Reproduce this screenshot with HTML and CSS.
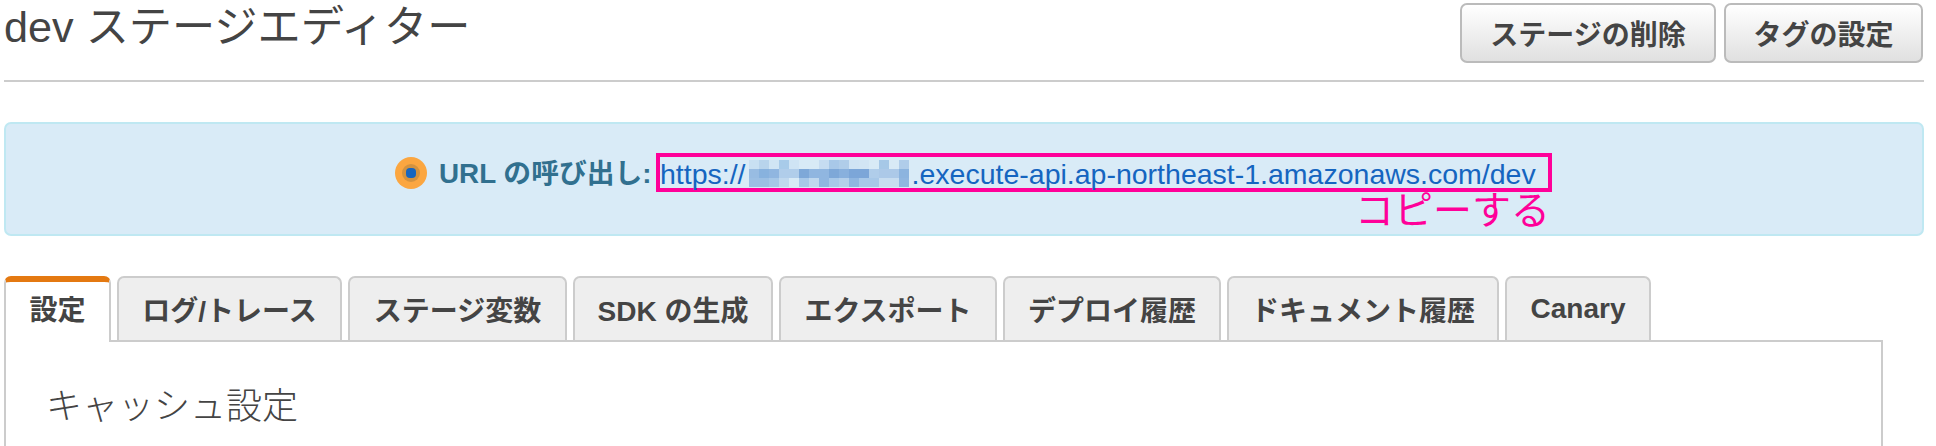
FILE: index.html
```html
<!DOCTYPE html>
<html lang="ja">
  <head>
    <meta charset="UTF-8" />
    <title>dev ステージエディター</title>
    <link rel="stylesheet" href="styles.css">
  </head>
  <body>
    <div class="head">
      <h1>dev ステージエディター</h1>
      <div class="actions">
        <button class="btn btn-del">ステージの削除</button>
        <button class="btn btn-tag">タグの設定</button>
      </div>
    </div>

    <div class="notice">
      <svg class="dot" viewBox="0 0 32 32" width="32" height="32">
        <circle cx="16" cy="16" r="16" fill="#fba640"/>
        <circle cx="16" cy="16" r="9" fill="#d3923f"/>
        <rect x="11" y="11" width="10" height="10" rx="4" fill="#1565c0"/>
      </svg>
      <b class="label">URL の呼び出し:</b>
      <div class="url-box">
        <a class="url">https://<span class="blur" id="blur"></span>.execute-api.ap-northeast-1.amazonaws.com/dev</a>
      </div>
      <div class="copy">コピーする</div>
    </div>

    <ul class="tabs">
      <li class="tab active t1">設定</li>
      <li class="tab t2">ログ/トレース</li>
      <li class="tab t3">ステージ変数</li>
      <li class="tab t4">SDK の生成</li>
      <li class="tab t5">エクスポート</li>
      <li class="tab t6">デプロイ履歴</li>
      <li class="tab t7">ドキュメント履歴</li>
      <li class="tab t8">Canary</li>
    </ul>
    <div class="panel">
      <h2>キャッシュ設定</h2>
    </div>

    <script>
      // mosaic over the hidden id part of the URL
      let shades = [
        "c8e0f2 b8d4ec d0e5f4 a8cbe9 cfe4f4 d8eaf6 d8eaf6 c6dcf1 a8c8e8 b0cde9 d0e4f4 d2e5f4 d8eaf6 a6c8e7 d8eaf6 b0cdea",
        "98bce2 88b2de 90b6e0 b0cdea b0cdea 7ea8d8 90b6e0 90b6e0 7ea8d8 88b0dd 7ca6d8 7ca6d8 b0cdea acc9e8 acc9e8 8cb4df",
        "9cbfe3 9cbfe3 a6c7e7 c0d8ee d8eaf6 a8c8e8 c0d8ee 90b6e0 a8c8e8 b4cfea 90b6e0 a8c8e8 a8c8e8 c8ddf0 c8ddf0 90b6e0",
      ];
      let blur = document.getElementById("blur");
      shades.forEach((row) => {
        row.split(" ").forEach((color) => {
          let cell = document.createElement("i");
          cell.style.backgroundColor = "#" + color;
          blur.appendChild(cell);
        });
      });
    </script>
  </body>
</html>
```

FILE: styles.css
```css
* {
  box-sizing: border-box;
}
html,
body {
  height: 446px;
  overflow: hidden;
}
body {
  margin: 0;
  padding: 0 12px 0 4px;
  background-color: #fff;
  color: #444;
  font-family: "Liberation Sans", "Noto Sans CJK JP", sans-serif;
}

/* header */
.head {
  display: flex;
  justify-content: space-between;
  height: 82px;
  padding-top: 3px;
  border-bottom: 2px solid #ccc;
}
h1 {
  margin: -3px 0 0;
  font-size: 43.2px;
  font-weight: 400;
  line-height: 54px;
  color: #444;
}
.actions {
  display: flex;
  gap: 8px;
  margin-right: 1px;
}
.btn {
  height: 60px;
  padding: 0;
  border: 2px solid #bbb;
  border-radius: 7px;
  background: linear-gradient(#fff, #e0e0e0);
  color: #444;
  font-family: inherit;
  font-size: 28px;
  font-weight: 700;
}
.btn-del {
  width: 256px;
}
.btn-tag {
  width: 199px;
}

/* url notice */
.notice {
  position: relative;
  display: flex;
  align-items: flex-start;
  height: 114px;
  margin-top: 40px;
  padding: 29px 0 0 389px;
  background-color: #d9ebf7;
  border: 2px solid #bfe8f2;
  border-radius: 7px;
}
.dot {
  flex: none;
  margin-top: 4px;
}
.label {
  flex: none;
  width: 211px;
  margin: 0 6px 0 12px;
  font-size: 27.8px;
  line-height: 41px;
  color: #31708f;
  white-space: nowrap;
}
.url-box {
  flex: none;
  width: 896px;
  height: 39px;
  border: 4px solid #ff0099;
  white-space: nowrap;
}
.url {
  display: flex;
  font-size: 28.5px;
  line-height: 35px;
  color: #1565c0;
}
.blur {
  display: grid;
  grid-template-columns: repeat(16, 10px);
  grid-auto-rows: 9px;
  margin: 3px 3px 0;
}
.copy {
  position: absolute;
  right: 372px;
  top: 65px;
  font-size: 39px;
  line-height: 44px;
  color: #ff0099;
}

/* tabs */
.tabs {
  display: flex;
  gap: 6px;
  height: 64px;
  margin: 40px 0 0;
  padding: 0;
  list-style: none;
}
.tab {
  display: flex;
  flex: none;
  align-items: center;
  justify-content: center;
  height: 64px;
  background-color: #eee;
  border: 2px solid #ccc;
  border-bottom: 0;
  border-radius: 7px 7px 0 0;
  font-size: 28px;
  font-weight: 700;
  color: #444;
}
.active {
  position: relative;
  z-index: 1;
  height: 66px;
  padding-bottom: 8px;
  background-color: #fff;
  border-top: 6px solid #e47911;
}
.t1 { width: 107px; }
.t2 { width: 225px; }
.t3 { width: 219px; }
.t4 { width: 200px; }
.t5 { width: 218px; }
.t6 { width: 218px; }
.t7 { width: 272px; }
.t8 { width: 146px; }

/* content */
.panel {
  width: 1879px;
  height: 106px;
  padding: 43px 0 0 40px;
  border: 2px solid #ccc;
  border-bottom: 0;
}
h2 {
  margin: 0;
  font-size: 36px;
  font-weight: 300;
  line-height: 44px;
  color: #444;
}
```
